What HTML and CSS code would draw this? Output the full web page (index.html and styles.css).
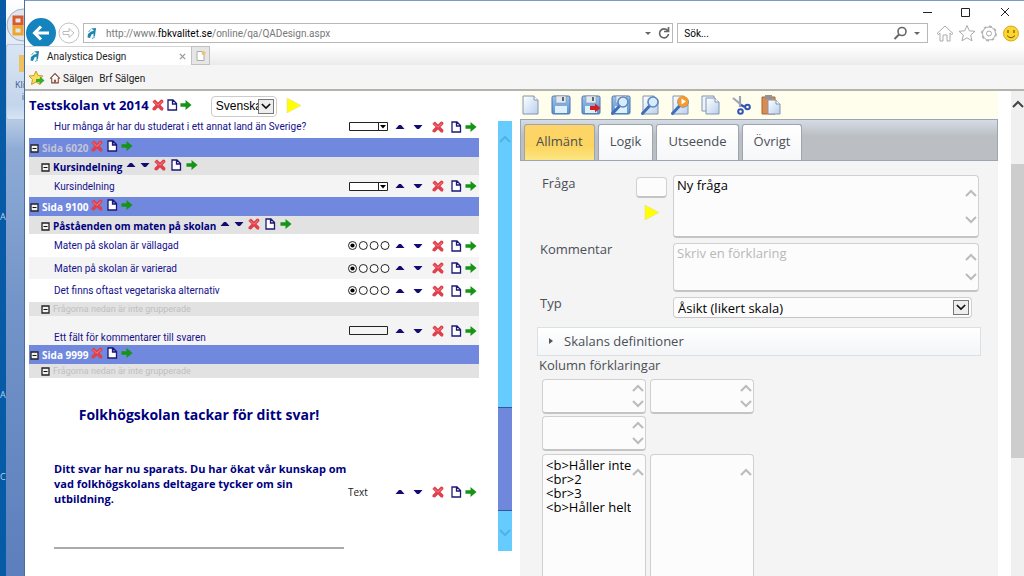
FILE: index.html
```html
<!DOCTYPE html>
<html lang="sv">
<head>
<meta charset="utf-8">
<title>Analystica Design</title>
<link rel="stylesheet" href="styles.css">
</head>
<body>
<svg class="defs" aria-hidden="true">
  <defs>
    <linearGradient id="blueish" x1="0" y1="0" x2="1" y2="1"><stop offset="0" stop-color="#fff"/><stop offset="1" stop-color="#b9d0ee"/></linearGradient>
    <linearGradient id="disk" x1="0" y1="0" x2="0" y2="1"><stop offset="0" stop-color="#9cc3ec"/><stop offset="1" stop-color="#5b93d3"/></linearGradient>
    <symbol id="del" viewBox="0 0 12 12"><path d="M1 2 3 .5 6 3.500 9 .5 11 1 11.500 3 8.500 6 11.500 9 11 11.500 9 11.500 6 8.500 3 11.500 .5 11 .5 9 3.500 6 .5 3Z" fill="#e0404c"/><path d="M2 2.500 6 6.500M10 2.500 6 6" stroke="#f58084"/></symbol>
    <symbol id="doc" viewBox="0 0 11 12"><path d="M1.500 1h5l3.500 3.500V11h-8.500zM6 1v4h4" fill="#fff" stroke="#1d1875" stroke-width="1.300"/></symbol>
    <symbol id="go" viewBox="0 0 13 12"><path d="M.5 4H6V.5L12.500 6 6 11.500V8H.5Z" fill="#169416"/></symbol>
    <symbol id="up" viewBox="0 0 10 4"><path d="M.5 4 4 0h2l3.500 4Z" fill="#120c72"/></symbol>
    <symbol id="down" viewBox="0 0 10 4"><path d="M.5 0 4 4h2L9.500 0Z" fill="#120c72"/></symbol>
    <symbol id="minus" viewBox="0 0 9 9"><path d="M1 1h7v7H1z" fill="#f2f2f2" stroke="#222" stroke-width="1.300"/><path d="M2.500 4.500h4" stroke="#111"/></symbol>
    <symbol id="play" viewBox="0 0 15 15"><path d="M1 0 15 7.500 1 15Z" fill="#ff0" stroke="#e3dca8" stroke-width=".6"/></symbol>
    <symbol id="radios" viewBox="0 0 42 9"><g fill="#fff" stroke="#222"><circle cx="4.500" cy="4.500" r="4"/><circle cx="15.300" cy="4.500" r="4"/><circle cx="26.100" cy="4.500" r="4"/><circle cx="37" cy="4.500" r="4"/></g><circle cx="4.500" cy="4.500" r="2.100"/></symbol>
    <symbol id="combo" viewBox="0 0 40 9"><path d="M.5.5h38v8H.5zM29.500.5v8" fill="#fff" stroke="#222"/><path d="M31 3h6l-3 3.500Z"/></symbol>
    <symbol id="field" viewBox="0 0 40 9"><path d="M.5.5h38v8H.5z" fill="#f4f4f4" stroke="#222"/></symbol>
    <symbol id="cu" viewBox="0 0 12 8"><path d="M1 7 6 2l5 5" fill="none" stroke="currentColor" stroke-width="2"/></symbol>
    <symbol id="cd" viewBox="0 0 12 8"><path d="M1 1l5 5 5-5" fill="none" stroke="currentColor" stroke-width="2"/></symbol>
    <symbol id="logo" viewBox="0 0 10 12"><path d="M4 1.500 9 1 8 9 6.500 10 6.500 6.500 4.500 7.500 3 11 .5 10.500 1 7 4 4.500 6.500 4V3Z" fill="#1c86ad"/><path d="M1.500 5 3.500 2.500M5 11.500l3-1.500" stroke="#4aa7c9"/></symbol>
    <symbol id="floppy" viewBox="0 0 20 20"><rect x="1" y="1" width="18" height="18" rx="1.500" fill="url(#disk)" stroke="#4a74a8"/><path d="M5 1h10v7H5z" fill="#e4e8ec" stroke="#8b98a8" stroke-width=".6"/><path d="M11 2h2v4h-2z" fill="#596777"/><path d="M4 11h12v7H4z" fill="#dff0fd"/></symbol>
    <symbol id="page" viewBox="0 0 20 20"><path d="M2 1h11l4 4v14H2z" fill="url(#blueish)" stroke="#8296b2"/><path d="M13 1v4h4" fill="#fff" stroke="#8296b2"/></symbol>
    <symbol id="lens" viewBox="0 0 20 20"><path d="M1.500 18.500 8 11.500" stroke="#3f6fb8" stroke-width="3" stroke-linecap="round"/><circle cx="12" cy="7" r="5" fill="#d6ebfb" stroke="#5c87bd" stroke-width="1.600"/></symbol>
  </defs>
</svg>

<aside class="desktop"><div class="desk"><span>A</span><span>A</span><span>C</span></div>
  <div class="office">
    <svg class="orb" viewBox="0 0 18 34"><circle cx="17" cy="17" r="16" fill="#dfe5ee" stroke="#a3afc2"/><path d="M8 9h8v7H8z" fill="none" stroke="#d9592c" stroke-width="3"/><path d="M8 19h8v7H8z" fill="none" stroke="#eda52b" stroke-width="3"/></svg>
    <div class="ribbon"><i></i><span>Kli</span><span>i</span></div>
  </div>
</aside>

<div class="window">
  <header>
    <div class="titlebar">
      <svg viewBox="0 0 90 14" class="wincontrols"><path d="M1 7.500h9M39.500 3.500h8v8h-8zM79 3l8 8M87 3l-8 8" fill="none" stroke="#222"/></svg>
    </div>
    <div class="nav">
      <button class="back" aria-label="Bakåt"><svg viewBox="0 0 30 30"><circle cx="15" cy="15" r="15" fill="#1583bd"/><path d="M23 15H9M15 8.500 8.500 15 15 21.500" fill="none" stroke="#fff" stroke-width="3"/></svg></button>
      <button class="fwd" aria-label="Framåt"><svg viewBox="0 0 22 22"><circle cx="11" cy="11" r="10" fill="#fff" stroke="#c3c3c3"/><path d="M5 9.500h6V6.500l5 4.500-5 4.500v-3H5z" fill="none" stroke="#bbb"/></svg></button>
      <div class="address"><svg class="logo"><use href="#logo"/></svg><span>http://www.<b>fbkvalitet.se</b>/online/qa/QADesign.aspx</span>
        <svg class="addrtools" viewBox="0 0 28 14"><path d="M1 6h6l-3 3z" fill="#666"/><path d="M23.500 4.500A4.500 4.500 0 1 0 24.500 8M24.500 1v4.500H20" fill="none" stroke="#666" stroke-width="1.700"/></svg></div>
      <label class="search"><input type="text" value="Sök..." aria-label="Sök"><svg viewBox="0 0 28 14"><circle cx="9" cy="5.500" r="4" fill="none" stroke="#666" stroke-width="1.600"/><path d="M6 8.500 1.500 13" stroke="#666" stroke-width="2"/><path d="M21 6h6l-3 3z" fill="#666"/></svg></label>
      <svg class="tools" viewBox="0 0 84 18"><g fill="#fff" stroke="#aaa"><path d="M1 9.500 9 2l8 7.500-1.500 1L14 9v8h-3v-6H7v6H4V9l-1.500 1.500z"/><path d="m31 1.500 2.300 5.300 5.700.5-4.300 3.800 1.300 5.700-5-3-5 3 1.300-5.700L23 7.300l5.700-.5z"/><circle cx="53" cy="9.500" r="6.500"/><circle cx="53" cy="9.500" r="7.300" stroke-width="1.200" stroke-dasharray="3 2.700" fill="none"/><circle cx="53" cy="9.500" r="2.500"/></g><circle cx="75" cy="9.500" r="7.500" fill="#fbd631" stroke="#d6a91c"/><path d="M72 6v3M78 6v3" stroke="#7a5a00" stroke-width="1.300"/><path d="M71 11.500q4 4.500 8 0" fill="none" stroke="#7a5a00"/></svg>
    </div>
    <div class="tabs-row"><div class="browser-tab"><svg class="logo"><use href="#logo"/></svg><span>Analystica Design</span><button aria-label="Stäng flik"><svg viewBox="0 0 8 8"><path d="m1 1 6 6M7 1 1 7" stroke="#999" stroke-width="1.500"/></svg></button></div>
      <button class="newtab" aria-label="Ny flik"><svg viewBox="0 0 12 12"><path d="M2 1.500h5l2 2v7H2z" fill="#fff" stroke="#aaa"/><circle cx="8.500" cy="3" r="2" fill="#ecc36b"/></svg></button></div>
    <div class="favs">
      <svg class="favstar" viewBox="0 0 16 16"><path d="m7 1 2 4.500 5 .5-4 3.500 1 5-4-2.500-4.500 2.500 1-5L0 6l5-.5z" fill="#fbdd59" stroke="#c79e25"/><path d="M7 9h4V6.500l4.500 4-4.500 4V12H7z" fill="#39ad30"/></svg>
      <svg class="favhome" viewBox="0 0 11 11"><path d="M1 6 5.500 1.500 10 6M2.500 5.500V10h6V5.500" fill="#fff" stroke="#7a4a3a"/><path d="M4.500 7h2v3h-2z" fill="#9b5a44"/></svg>
      <a href="#">Sälgen</a><a href="#">Brf Sälgen</a>
    </div>
  </header>

  <main>
    <section class="survey">
      <div class="survey-head"><h1>Testskolan vt 2014</h1><svg class="i12"><use href="#del"/></svg><svg class="i12"><use href="#doc"/></svg><svg class="i12"><use href="#go"/></svg>
        <div class="lang"><select aria-label="Språk"><option>Svenska</option></select><span class="chev"><svg><use href="#cd"/></svg></span></div>
        <svg class="play"><use href="#play"/></svg></div>

      <div class="q first"><span>Hur många år har du studerat i ett annat land än Sverige?</span><svg class="kind"><use href="#combo"/></svg><svg class="tri"><use href="#up"/></svg><svg class="tri"><use href="#down"/></svg><svg class="i12"><use href="#del"/></svg><svg class="i12"><use href="#doc"/></svg><svg class="i12"><use href="#go"/></svg></div>
      <div class="pg dim"><svg class="minus"><use href="#minus"/></svg><b>Sida 6020</b><svg class="i12"><use href="#del"/></svg><svg class="i12"><use href="#doc"/></svg><svg class="i12"><use href="#go"/></svg></div>
      <div class="grp"><svg class="minus"><use href="#minus"/></svg><b>Kursindelning</b><svg class="tri"><use href="#up"/></svg><svg class="tri"><use href="#down"/></svg><svg class="i12"><use href="#del"/></svg><svg class="i12"><use href="#doc"/></svg><svg class="i12"><use href="#go"/></svg></div>
      <div class="q alt"><span>Kursindelning</span><svg class="kind"><use href="#combo"/></svg><svg class="tri"><use href="#up"/></svg><svg class="tri"><use href="#down"/></svg><svg class="i12"><use href="#del"/></svg><svg class="i12"><use href="#doc"/></svg><svg class="i12"><use href="#go"/></svg></div>
      <div class="pg"><svg class="minus"><use href="#minus"/></svg><b>Sida 9100</b><svg class="i12"><use href="#del"/></svg><svg class="i12"><use href="#doc"/></svg><svg class="i12"><use href="#go"/></svg></div>
      <div class="grp"><svg class="minus"><use href="#minus"/></svg><b>Påståenden om maten på skolan</b><svg class="tri"><use href="#up"/></svg><svg class="tri"><use href="#down"/></svg><svg class="i12"><use href="#del"/></svg><svg class="i12"><use href="#doc"/></svg><svg class="i12"><use href="#go"/></svg></div>
      <div class="q"><span>Maten på skolan är vällagad</span><svg class="kind"><use href="#radios"/></svg><svg class="tri"><use href="#up"/></svg><svg class="tri"><use href="#down"/></svg><svg class="i12"><use href="#del"/></svg><svg class="i12"><use href="#doc"/></svg><svg class="i12"><use href="#go"/></svg></div>
      <div class="q alt"><span>Maten på skolan är varierad</span><svg class="kind"><use href="#radios"/></svg><svg class="tri"><use href="#up"/></svg><svg class="tri"><use href="#down"/></svg><svg class="i12"><use href="#del"/></svg><svg class="i12"><use href="#doc"/></svg><svg class="i12"><use href="#go"/></svg></div>
      <div class="q"><span>Det finns oftast vegetariska alternativ</span><svg class="kind"><use href="#radios"/></svg><svg class="tri"><use href="#up"/></svg><svg class="tri"><use href="#down"/></svg><svg class="i12"><use href="#del"/></svg><svg class="i12"><use href="#doc"/></svg><svg class="i12"><use href="#go"/></svg></div>
      <div class="ungrouped"><svg class="minus"><use href="#minus"/></svg><span>Frågorna nedan är inte grupperade</span></div>
      <div class="q alt tall"><span>Ett fält för kommentarer till svaren</span><svg class="kind"><use href="#field"/></svg><svg class="tri"><use href="#up"/></svg><svg class="tri"><use href="#down"/></svg><svg class="i12"><use href="#del"/></svg><svg class="i12"><use href="#doc"/></svg><svg class="i12"><use href="#go"/></svg></div>
      <div class="pg"><svg class="minus"><use href="#minus"/></svg><b>Sida 9999</b><svg class="i12"><use href="#del"/></svg><svg class="i12"><use href="#doc"/></svg><svg class="i12"><use href="#go"/></svg></div>
      <div class="ungrouped"><svg class="minus"><use href="#minus"/></svg><span>Frågorna nedan är inte grupperade</span></div>
      <div class="q thanks"><div class="thanks-text"><h2>Folkhögskolan tackar för ditt svar!</h2><p>Ditt svar har nu sparats. Du har ökat vår kunskap om vad folkhögskolans deltagare tycker om sin utbildning.</p><hr></div><span class="textkind">Text</span><svg class="tri"><use href="#up"/></svg><svg class="tri"><use href="#down"/></svg><svg class="i12"><use href="#del"/></svg><svg class="i12"><use href="#doc"/></svg><svg class="i12"><use href="#go"/></svg></div>
    </section>

    <div class="scroll"><svg class="chv"><use href="#cu"/></svg><div class="thumb"></div><svg class="chv"><use href="#cd"/></svg></div>

    <section class="editor">
      <div class="toolbar">
        <svg viewBox="0 0 20 20"><use href="#page"/></svg>
        <svg viewBox="0 0 20 20"><use href="#floppy"/></svg>
        <svg viewBox="0 0 20 20"><use href="#floppy"/><path d="M9 11h5V8.500l5.500 4.500-5.500 4.500V15H9z" fill="#d3201f"/></svg>
        <svg viewBox="0 0 20 20"><use href="#floppy"/><use href="#lens"/></svg>
        <svg viewBox="0 0 20 20"><use href="#page"/><use href="#lens"/></svg>
        <svg viewBox="0 0 20 20"><use href="#page"/><use href="#lens"/><circle cx="12" cy="6.500" r="5.500" fill="#f59a2c"/><path d="m10.500 3.500 4.500 3-4.500 3z" fill="#fff"/></svg>
        <svg viewBox="0 0 20 20"><path d="M1 1h12v15H1z" fill="#eef4fb" stroke="#8296b2"/><path d="M5 3h9l4 4v12H5z" fill="url(#blueish)" stroke="#8296b2"/><path d="M14 3v4h4" fill="#fff" stroke="#8296b2"/></svg>
        <svg viewBox="0 0 20 20"><path d="m2 3 11 9M9 1v11" stroke="#9aa6b3" stroke-width="2.200"/><circle cx="16.500" cy="12" r="2.300" fill="none" stroke="#3153b3" stroke-width="2"/><circle cx="9.500" cy="16.500" r="2.300" fill="none" stroke="#3153b3" stroke-width="2"/><path d="m10 10 4 2" stroke="#3153b3" stroke-width="2"/></svg>
        <svg viewBox="0 0 20 20"><path d="M1 2h13v17H1z" fill="#d98b50" stroke="#a7663b"/><path d="M4 0h7v4H4z" fill="#8d949d"/><path d="M7 5h8l4 4v10H7z" fill="url(#blueish)" stroke="#8296b2"/><path d="M15 5v4h4" fill="#fff" stroke="#8296b2"/></svg>
      </div>
      <div class="tabs" role="tablist"><button role="tab" class="active">Allmänt</button><button role="tab">Logik</button><button role="tab">Utseende</button><button role="tab">Övrigt</button></div>
      <form>
        <label for="q" class="first-label">Fråga</label>
        <div class="num"><input type="text" aria-label="Nummer"><svg class="play"><use href="#play"/></svg></div>
        <div class="area a1"><textarea id="q">Ny fråga</textarea><span><svg class="chv"><use href="#cu"/></svg><svg class="chv"><use href="#cd"/></svg></span></div>
        <label for="k" class="wide">Kommentar</label>
        <div class="area a2"><textarea id="k" placeholder="Skriv en förklaring"></textarea><span><svg class="chv"><use href="#cu"/></svg><svg class="chv"><use href="#cd"/></svg></span></div>
        <label for="t" class="wide">Typ</label>
        <div class="type"><select id="t"><option>Åsikt (likert skala)</option></select><span class="chev"><svg><use href="#cd"/></svg></span></div>
      </form>
      <button class="accordion"><svg viewBox="0 0 6 8"><path d="M1 1l4 3-4 3z" fill="#555"/></svg>Skalans definitioner</button>
      <h3>Kolumn förklaringar</h3>
      <div class="cols">
        <div class="area s"><textarea aria-label="Kolumn 1"></textarea><span><svg class="chv"><use href="#cu"/></svg><svg class="chv"><use href="#cd"/></svg></span></div>
        <div class="area s"><textarea aria-label="Kolumn 2"></textarea><span><svg class="chv"><use href="#cu"/></svg><svg class="chv"><use href="#cd"/></svg></span></div>
        <div class="area s"><textarea aria-label="Kolumn 3"></textarea><span><svg class="chv"><use href="#cu"/></svg><svg class="chv"><use href="#cd"/></svg></span></div>
      </div>
      <div class="cols big">
        <div class="area b"><textarea aria-label="Rader" wrap="off">&lt;b&gt;Håller inte
&lt;br&gt;2
&lt;br&gt;3
&lt;b&gt;Håller helt</textarea><span><svg class="chv"><use href="#cu"/></svg></span></div>
        <div class="area b"><textarea aria-label="Rader 2"></textarea><span><svg class="chv"><use href="#cu"/></svg></span></div>
      </div>
    </section>
    <div class="pagescroll"><svg class="chv"><use href="#cu"/></svg><div></div></div>
  </main>
</div>
</body>
</html>
```
FILE: styles.css
```css
* { box-sizing: border-box; }
body { margin: 0; height: 100vh; overflow: hidden; display: flex; background: #fff; font-family: "Open Sans", "Noto Sans", sans-serif; font-size: 10px; color: #222; }
svg { display: block; flex: none; }
button { font: inherit; color: inherit; border: 0; padding: 0; background: none; }
input, select, textarea { font: inherit; border: 0; padding: 0; margin: 0; background: transparent; outline: 0; min-width: 0; appearance: none; }
.defs { position: absolute; width: 0; height: 0; }

.desktop { width: 25px; flex: none; display: flex; border-right: 1px solid #466f9f; }
.desk { width: 6px; background: #075aa5; overflow: hidden; color: #b8d2ec; font-size: 9px; line-height: 12px; padding-top: 211px; }
.desk span { display: block; height: 178px; }
.desk span + span { height: 82px; }
.office { flex: 1; overflow: hidden; background: linear-gradient(#fff 0, #e9eff7 30px, #c4d5ea 110px, #8eabd5 150px, #7495c9 300px, #5c7fbd); }
.orb { width: 18px; height: 34px; margin-top: 8px; }
.ribbon { height: 76px; margin-top: 2px; border: 1px solid #b4c6df; border-right: 0; background: linear-gradient(#d9e5f4, #c3d5ec 60px, #d6e5f5); color: #38598c; font-size: 9px; line-height: 12px; text-align: right; padding: 10px 0 0 8px; border-radius: 3px 0 0 3px; }
.ribbon i { display: block; height: 17px; margin: 0 0 7px 4px; background: #edc15b; }
.ribbon span { display: block; }

.window { flex: 1; min-width: 0; display: flex; flex-direction: column; border-top: 1px solid #7a9cc2; }
header { font-family: Roboto, "Open Sans", sans-serif; font-size: 10px; }
.titlebar { height: 17px; display: flex; justify-content: flex-end; padding: 4px 12px 0 0; }
.wincontrols { width: 90px; height: 14px; }
.nav { height: 28px; display: flex; align-items: center; padding: 2px 4px 0 1px; }
.back svg { width: 30px; height: 30px; }
.fwd { margin: 0 3px 0 2px; }
.fwd svg { width: 22px; height: 22px; }
.logo { width: 10px; height: 12px; }
.address { flex: 712; height: 20px; border: 1px solid #b8b8b8; display: flex; align-items: center; gap: 9px; padding: 0 0 0 3px; color: #777; margin-right: 4px; }
.address span { flex: 1; }
.address b { font-weight: 400; color: #000; }
.addrtools { width: 28px; height: 14px; }
.search { flex: 288; height: 20px; border: 1px solid #b8b8b8; display: flex; align-items: center; padding: 0 6px; margin-right: 8px; }
.search input { flex: 1; }
.search svg { width: 28px; height: 14px; }
.tools { width: 84px; height: 18px; }
.tabs-row { height: 19px; display: flex; background: linear-gradient(#fff, #ebebeb); }
.browser-tab { width: 166px; display: flex; align-items: center; gap: 7px; padding: 0 5px; background: #fff; border-top: 1px solid #d5d5d5; }
.browser-tab span { flex: 1; }
.browser-tab button svg { width: 7px; height: 7px; }
.newtab { width: 19px; border: 1px solid #c2c2c2; background: #e6e6e6; display: grid; place-items: center; }
.newtab svg { width: 12px; height: 12px; }
.favs { height: 26px; display: flex; align-items: center; background: #f5f5f5; border-bottom: 2px solid #b4b4ae; padding: 2px 0 0 4px; }
.favs a { color: #222; text-decoration: none; margin-right: 6px; }
.favstar { width: 16px; height: 16px; margin-right: 4px; }
.favhome { width: 12px; height: 12px; margin-right: 2px; }

main { flex: 1; min-height: 0; display: grid; grid-template-columns: minmax(0, 450fr) 19px 14px minmax(0, 486fr) 13px 13px; grid-template-rows: minmax(0, 1fr); padding-left: 4px; }
.i12 { width: 12px; height: 12px; }
.tri { width: 10px; height: 4px; }
.minus { width: 9px; height: 9px; }
.play { width: 15px; height: 15px; }
.chv { width: 12px; height: 8px; }
.survey { color: #14108c; }
.survey-head { height: 28px; display: flex; align-items: center; gap: 2px; }
h1 { font-size: 13px; line-height: 18px; margin: 0 1px 0 0; color: #000080; }
.lang { width: 66px; height: 21px; margin: 2px 7px 0 17px; border: 1px solid #ccc; border-radius: 4px; display: flex; align-items: center; padding: 0 2px 0 4px; color: #222; font-family: "Liberation Sans", sans-serif; font-size: 12px; }
.lang select { flex: 1; overflow: hidden; text-overflow: clip; }
.chev { width: 16px; height: 15px; border: 1px solid #777; background: #eee; display: grid; place-items: center; color: #111; flex: none; }
.chev svg { width: 10px; height: 7px; }
.q { height: 23px; display: grid; grid-template-columns: minmax(0, 1fr) 43px 18px 18px 22px 14px 16px; align-items: center; justify-items: center; padding-left: 25px; }
.q > :first-child { justify-self: start; white-space: nowrap; }
.q > span:first-child { font-family: Roboto, "Open Sans", sans-serif; }
.q .kind { justify-self: start; width: 42px; height: 9px; }
.q.first { height: 19px; padding-bottom: 4px; }
.alt { background: #f4f4f4; height: 22px; }
.q.tall { height: 29px; }
.tall span { align-self: end; line-height: 15px; }
.pg, .grp { height: 19px; display: flex; align-items: center; background: #7088dd; color: #fff; padding-left: 1px; gap: 3px; }
.pg .i12, .grp .i12, .grp .tri { margin-bottom: 3px; }
.pg b, .grp b { line-height: 15px; padding-top: 2px; }
.pg .minus, .grp .minus { margin-top: 2px; }
.pg.dim b { color: #c3c5d6; }
.grp { height: 18px; background: #e2e2e2; color: #000080; padding-left: 12px; gap: 4px; }
.grp b { margin: 0 0 0 -1px; }
.ungrouped { height: 14px; display: flex; align-items: center; gap: 3px; background: #e2e2e2; padding-left: 12px; color: #c0c0c0; font-family: Roboto, "Open Sans", sans-serif; font-size: 9px; }
.thanks { height: 228px; }
.thanks-text { width: 100%; max-width: 294px; align-self: start; padding-top: 27px; }
.q.thanks > .thanks-text { white-space: normal; }
h2 { font-size: 14px; line-height: 20px; margin: 0 4px 36px 0; text-align: center; color: #000080; }
p { margin: 0; font-size: 11px; font-weight: 700; line-height: 15px; color: #000080; }
hr { margin: 41px 4px 0 0; border: 0; border-top: 2px solid #aaa; }
.textkind { justify-self: start; color: #222; font-size: 10px; }

.scroll { grid-column: 3; margin: 30px 0 25px; background: #66ccff; display: flex; flex-direction: column; align-items: center; color: #52b2e0; padding: 14px 0; }
.thumb { width: 100%; flex: 0 0 104px; margin: auto 0 18px; background: #6f88dc; border: 1px solid #34569c; border-width: 1px 0; }
.pagescroll { grid-column: 6; background: #f0f0f0; display: flex; flex-direction: column; align-items: center; color: #444; padding-top: 9px; }
.pagescroll div { width: 100%; height: 294px; margin-top: 56px; background: #cdcdcd; }

.editor { margin-left: 8px; background: #f4f4f4; color: #4a4f57; font-size: 13px; line-height: 18px; overflow: hidden; }
.toolbar { height: 28px; background: #fffdeb; display: flex; align-items: center; gap: 10px; padding-left: 1px; }
.toolbar svg { width: 20px; height: 20px; }
.tabs { height: 42px; display: flex; gap: 3px; padding: 4px 3px 0; border: 1px solid #9da5b0; background: linear-gradient(#d5dce5, #bbbfc4 16px); }
.tabs button { padding: 0 11px 4px; background: linear-gradient(#fff, #f6f7f9); border: 1px solid #9da5b0; border-bottom: 0; border-radius: 3px 3px 0 0; }
.tabs .active { background: linear-gradient(#fed46a, #fcd55f 60%, #fde683); }
form { display: grid; grid-template-columns: 90px 31px minmax(0, 1fr); column-gap: 6px; row-gap: 5px; padding: 14px 19px 0 20px; }
form label { line-height: 12px; }
.first-label { padding: 2px 0 0 2px; }
.wide { grid-column: span 2; }
.num { display: flex; flex-direction: column; align-items: center; gap: 7px; padding: 2px 0 0; }
.num input { width: 100%; height: 21px; }
.area, .num input, .type { background: #fcfcfc; border: 1px solid #d0d0d0; border-bottom: 2px solid #c4c4c4; border-radius: 4px; }
.area { display: flex; color: #111; }
.area textarea { flex: 1; resize: none; overflow: hidden; padding: 0 0 0 3px; }
.area textarea::placeholder { color: #b8b8b8; }
.area > span { display: flex; flex-direction: column; justify-content: space-between; color: #bbb; padding: 13px 1px 12px; }
.a1 { height: 63px; }
.a2 { height: 49px; }
.area.a2 > span { padding: 9px 1px; }
.type { height: 21px; margin-right: 7px; border-bottom-width: 1px; display: flex; align-items: center; padding: 0 2px 0 4px; color: #111; }
.type select { flex: 1; }
.accordion { width: calc(100% - 34px); height: 29px; margin: 9px 17px 0; display: flex; align-items: center; gap: 10px; padding: 0 10px 2px; border: 1px solid #dcdfe3; background: linear-gradient(#fff, #f3f5f7); }
.accordion svg { width: 6px; height: 8px; }
h3 { margin: 0 19px; font-size: 13px; line-height: 19px; font-weight: 400; }
.cols { display: grid; grid-template-columns: 104px 104px; gap: 2px 4px; padding: 4px 22px 0; }
.s { height: 35px; }
.area.s > span { padding: 4px 1px; }
.big { padding-top: 3px; }
.b { height: 148px; }
.b textarea { line-height: 14px; padding-top: 3px; }
```
